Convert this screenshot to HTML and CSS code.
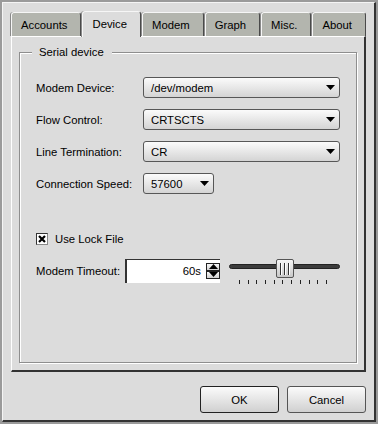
FILE: index.html
```html
<!DOCTYPE html>
<html>
<head>
<meta charset="utf-8">
<link rel="stylesheet" href="styles.css">
</head>
<body>
<div class="window">
  <div class="frame">
    <div class="tabs">
      <div class="tab">Accounts</div>
      <div class="tab active">Device</div>
      <div class="tab">Modem</div>
      <div class="tab">Graph</div>
      <div class="tab">Misc.</div>
      <div class="tab">About</div>
    </div>
    <div class="panel">
      <div class="group">
        <span class="legend">Serial device</span>
        <div class="form">
          <span class="label">Modem Device:</span>
          <div class="combo"><span>/dev/modem</span><svg class="arrow" width="9" height="5" viewBox="0 0 9 5"><polygon points="0,0 9,0 4.5,5" fill="#000"/></svg></div>
          <span class="label">Flow Control:</span>
          <div class="combo"><span>CRTSCTS</span><svg class="arrow" width="9" height="5" viewBox="0 0 9 5"><polygon points="0,0 9,0 4.5,5" fill="#000"/></svg></div>
          <span class="label">Line Termination:</span>
          <div class="combo"><span>CR</span><svg class="arrow" width="9" height="5" viewBox="0 0 9 5"><polygon points="0,0 9,0 4.5,5" fill="#000"/></svg></div>
          <span class="label">Connection Speed:</span>
          <div class="combo small"><span>57600</span><svg class="arrow" width="9" height="5" viewBox="0 0 9 5"><polygon points="0,0 9,0 4.5,5" fill="#000"/></svg></div>
        </div>
        <div class="check">
          <span class="box"><svg width="10" height="10" viewBox="0 0 10 10"><path d="M2 2 L8 8 M8 2 L2 8" stroke="#000" stroke-width="2.2"/></svg></span>
          <span>Use Lock File</span>
        </div>
        <div class="timeout">
          <span class="tlabel">Modem Timeout:</span>
          <div class="spin">
            <span class="value">60s</span>
            <div class="spinbtns">
              <div class="sbtn"><svg width="9" height="5" viewBox="0 0 9 5"><polygon points="0,5 9,5 4.5,0" fill="#000"/></svg></div>
              <div class="sbtn"><svg width="9" height="5" viewBox="0 0 9 5"><polygon points="0,0 9,0 4.5,5" fill="#000"/></svg></div>
            </div>
          </div>
          <div class="slider">
            <div class="track">
              <div class="groove"></div>
              <div class="thumb"><i></i><i></i><i></i></div>
            </div>
            <div class="ticks"><i></i><i></i><i></i><i></i><i></i><i></i><i></i><i></i><i></i><i></i><i></i></div>
          </div>
        </div>
      </div>
    </div>
    <div class="buttons">
      <button class="btn default">OK</button>
      <button class="btn">Cancel</button>
    </div>
  </div>
</div>
</body>
</html>
```
FILE: styles.css
```css
* { box-sizing: border-box; }
html, body { margin: 0; padding: 0; }
body {
  width: 378px;
  height: 424px;
  overflow: hidden;
  background: #9c9c9c;
  font-family: "Liberation Sans", Arial, sans-serif;
  font-size: 11.3px;
  color: #000;
}
.window {
  width: 378px;
  height: 424px;
  border: 2px solid #9a9a9a;
}
.frame {
  height: 100%;
  background: #dcdcdc;
  border-left: 1px solid #f4f4f4;
  border-top: 1px solid #f4f4f4;
  border-right: 2px solid #333;
  border-bottom: 2px solid #333;
  padding: 8px 8px 0 8px;
  display: flex;
  flex-direction: column;
}
.tabs {
  display: flex;
  align-items: flex-end;
  gap: 1px;
  height: 25px;
}
.tab {
  height: 24px;
  padding: 0 13px 0 9px;
  display: flex;
  align-items: center;
  white-space: nowrap;
  background: #b3b5ae;
  border: 1px solid;
  border-color: #f6f6f6 #4a4a4a transparent #f6f6f6;
  border-bottom: 0;
  border-radius: 3px 3px 0 0;
  box-shadow: -1px 0 0 #8a8a8a;
}
.tab.active {
  height: 26px;
  margin-bottom: -1px;
  background: #dcdcdc;
  position: relative;
  z-index: 1;
  padding-bottom: 1px;
}
.panel {
  height: 336px;
  background: #dcdcdc;
  border-top: 1px solid #fff;
  border-left: 1px solid #fff;
  border-right: 2px solid #333;
  border-bottom: 2px solid #333;
  padding: 15px 0 0 7px;
}
.group {
  position: relative;
  width: 338px;
  height: 311px;
  border: 1px solid #8e8e8e;
  box-shadow: inset 1px 1px 0 #fff, 1px 1px 0 #fff;
  padding: 24px 16px 0 16px;
}
.legend {
  position: absolute;
  top: -7px;
  left: 12px;
  line-height: 13px;
  padding: 0 8px 0 7px;
  background: #dcdcdc;
}
.form {
  display: grid;
  grid-template-columns: 107px 197px;
  row-gap: 11px;
  align-items: center;
  justify-items: start;
}
.combo {
  width: 197px;
  height: 21px;
  border: 1px solid #575757;
  border-radius: 3px;
  background: linear-gradient(#fbfbfb, #d4d4d4);
  display: flex;
  align-items: center;
  justify-content: space-between;
  padding: 0 4px 0 7px;
}
.combo.small { width: 71px; }
.arrow { display: block; }
.check {
  display: flex;
  align-items: center;
  gap: 7px;
  margin-top: 39px;
  height: 12px;
}
.box {
  width: 12px;
  height: 12px;
  background: #fff;
  border: 1px solid;
  border-color: #333 #888 #888 #333;
  display: flex;
  align-items: center;
  justify-content: center;
}
.box svg { display: block; }
.timeout {
  display: flex;
  align-items: flex-start;
  margin-top: 14px;
}
.tlabel {
  width: 89px;
  line-height: 24px;
  white-space: nowrap;
}
.spin {
  width: 95px;
  height: 24px;
  background: #fff;
  border-left: 2px solid #333;
  border-top: 1px solid #333;
  display: flex;
  align-items: center;
  justify-content: flex-end;
  padding: 0 0 2px 0;
}
.value { margin-right: 5px; }
.spinbtns {
  display: flex;
  flex-direction: column;
  width: 14px;
}
.sbtn {
  height: 8px;
  border: 1px solid #222;
  background: linear-gradient(#f8f8f8, #d0d0d0);
  display: flex;
  align-items: center;
  justify-content: center;
}
.sbtn svg { display: block; }
.slider {
  width: 111px;
  margin-left: 9px;
  display: flex;
  flex-direction: column;
}
.track {
  position: relative;
  height: 20px;
}
.groove {
  height: 5px;
  margin-top: 5px;
  background: #3c3c3c;
  border: 1px solid #222;
  border-radius: 3px;
}
.thumb {
  position: absolute;
  left: 47px;
  top: 0;
  width: 18px;
  height: 19px;
  border: 1px solid #555;
  border-radius: 2px;
  background: linear-gradient(#f6f6f6, #c8c8c8);
  display: flex;
  justify-content: center;
  align-items: center;
  gap: 2px;
}
.thumb i {
  width: 2px;
  height: 12px;
  border-left: 1px solid #333;
  border-right: 1px solid #fff;
}
.ticks {
  display: flex;
  justify-content: space-between;
  padding: 0 13px 0 10px;
  margin-top: 1px;
}
.ticks i {
  width: 1px;
  height: 4px;
  background: #222;
}
.buttons {
  display: flex;
  justify-content: flex-end;
  gap: 8px;
  margin-top: 14px;
}
.btn {
  width: 79px;
  height: 27px;
  font: inherit;
  color: #000;
  border: 1px solid #555;
  border-radius: 3px;
  background: linear-gradient(#fbfbfb, #d0d0d0);
  padding: 0;
}
.btn.default { border-color: #222; }
```
